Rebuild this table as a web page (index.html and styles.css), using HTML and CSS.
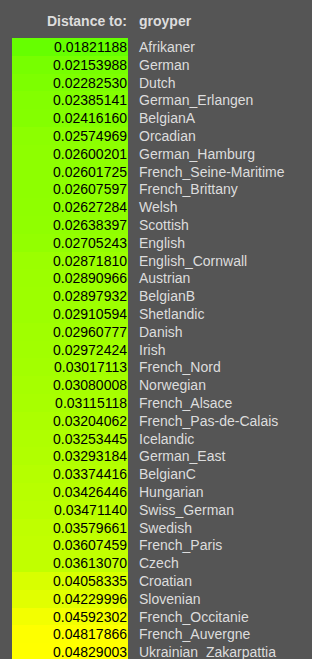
FILE: index.html
```html
<!DOCTYPE html>
<html>
<head>
<meta charset="utf-8">
<link rel="stylesheet" href="styles.css">
</head>
<body>
<div class="wrap">
  <div class="row head">
    <div class="val">Distance to:</div>
    <div class="name">groyper</div>
  </div>
  <div class="list">
    <div class="row"><div class="val" style="background:rgb(102,255,0)">0.01821188</div><div class="name">Afrikaner</div></div>
    <div class="row"><div class="val" style="background:rgb(119,255,0)">0.02153988</div><div class="name">German</div></div>
    <div class="row"><div class="val" style="background:rgb(125,255,0)">0.02282530</div><div class="name">Dutch</div></div>
    <div class="row"><div class="val" style="background:rgb(131,255,0)">0.02385141</div><div class="name">German_Erlangen</div></div>
    <div class="row"><div class="val" style="background:rgb(132,255,0)">0.02416160</div><div class="name">BelgianA</div></div>
    <div class="row"><div class="val" style="background:rgb(140,255,0)">0.02574969</div><div class="name">Orcadian</div></div>
    <div class="row"><div class="val" style="background:rgb(142,255,0)">0.02600201</div><div class="name">German_Hamburg</div></div>
    <div class="row"><div class="val" style="background:rgb(142,255,0)">0.02601725</div><div class="name">French_Seine-Maritime</div></div>
    <div class="row"><div class="val" style="background:rgb(142,255,0)">0.02607597</div><div class="name">French_Brittany</div></div>
    <div class="row"><div class="val" style="background:rgb(143,255,0)">0.02627284</div><div class="name">Welsh</div></div>
    <div class="row"><div class="val" style="background:rgb(144,255,0)">0.02638397</div><div class="name">Scottish</div></div>
    <div class="row"><div class="val" style="background:rgb(147,255,0)">0.02705243</div><div class="name">English</div></div>
    <div class="row"><div class="val" style="background:rgb(155,255,0)">0.02871810</div><div class="name">English_Cornwall</div></div>
    <div class="row"><div class="val" style="background:rgb(156,255,0)">0.02890966</div><div class="name">Austrian</div></div>
    <div class="row"><div class="val" style="background:rgb(157,255,0)">0.02897932</div><div class="name">BelgianB</div></div>
    <div class="row"><div class="val" style="background:rgb(157,255,0)">0.02910594</div><div class="name">Shetlandic</div></div>
    <div class="row"><div class="val" style="background:rgb(160,255,0)">0.02960777</div><div class="name">Danish</div></div>
    <div class="row"><div class="val" style="background:rgb(161,255,0)">0.02972424</div><div class="name">Irish</div></div>
    <div class="row"><div class="val" style="background:rgb(163,255,0)">0.03017113</div><div class="name">French_Nord</div></div>
    <div class="row"><div class="val" style="background:rgb(166,255,0)">0.03080008</div><div class="name">Norwegian</div></div>
    <div class="row"><div class="val" style="background:rgb(168,255,0)">0.03115118</div><div class="name">French_Alsace</div></div>
    <div class="row"><div class="val" style="background:rgb(172,255,0)">0.03204062</div><div class="name">French_Pas-de-Calais</div></div>
    <div class="row"><div class="val" style="background:rgb(175,255,0)">0.03253445</div><div class="name">Icelandic</div></div>
    <div class="row"><div class="val" style="background:rgb(177,255,0)">0.03293184</div><div class="name">German_East</div></div>
    <div class="row"><div class="val" style="background:rgb(181,255,0)">0.03374416</div><div class="name">BelgianC</div></div>
    <div class="row"><div class="val" style="background:rgb(184,255,0)">0.03426446</div><div class="name">Hungarian</div></div>
    <div class="row"><div class="val" style="background:rgb(186,255,0)">0.03471140</div><div class="name">Swiss_German</div></div>
    <div class="row"><div class="val" style="background:rgb(191,255,0)">0.03579661</div><div class="name">Swedish</div></div>
    <div class="row"><div class="val" style="background:rgb(193,255,0)">0.03607459</div><div class="name">French_Paris</div></div>
    <div class="row"><div class="val" style="background:rgb(193,255,0)">0.03613070</div><div class="name">Czech</div></div>
    <div class="row"><div class="val" style="background:rgb(216,255,0)">0.04058335</div><div class="name">Croatian</div></div>
    <div class="row"><div class="val" style="background:rgb(225,255,0)">0.04229996</div><div class="name">Slovenian</div></div>
    <div class="row"><div class="val" style="background:rgb(243,255,0)">0.04592302</div><div class="name">French_Occitanie</div></div>
    <div class="row"><div class="val" style="background:rgb(254,255,0)">0.04817866</div><div class="name">French_Auvergne</div></div>
    <div class="row"><div class="val" style="background:rgb(255,255,0)">0.04829003</div><div class="name">Ukrainian_Zakarpattia</div></div>
  </div>
</div>
</body>
</html>
```
FILE: styles.css
```css
html, body {
  margin: 0;
  padding: 0;
  background: #555555;
  overflow: hidden;
}
.wrap {
  padding: 12px 0 0 12px;
  font-family: "Liberation Sans", Arial, sans-serif;
  font-size: 14px;
  color: #dddddd;
}
.list {
  display: grid;
  grid-auto-rows: 17.8px;
}
.row {
  display: grid;
  grid-template-columns: 116px 1fr;
  column-gap: 11px;
  white-space: nowrap;
}
.list .row > div {
  line-height: 16.8px;
  padding-top: 1px;
}
.head {
  height: 18px;
  line-height: 18px;
  margin-bottom: 8px;
  font-weight: bold;
}
.val {
  text-align: right;
  padding-right: 1px;
}
.list .val {
  color: #000000;
}
.name {
  text-align: left;
}
```
